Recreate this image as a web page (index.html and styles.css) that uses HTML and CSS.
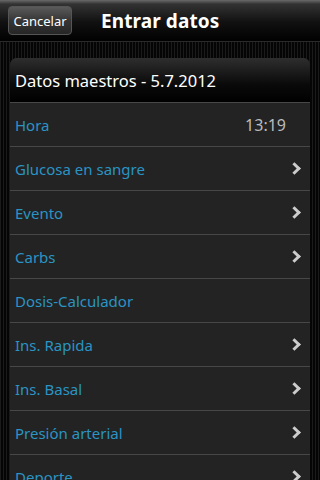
FILE: index.html
```html
<!doctype html>
<html lang="es">
<head>
  <meta charset="utf-8"/>
  <title>Entrar datos</title>
  <link rel="stylesheet" href="styles.css">
</head>
<body>
<div class="topbar">
  <button class="cancel">Cancelar</button>
  <h1>Entrar datos</h1>
</div>
<div class="content">
  <div class="card">
    <div class="card-head">Datos maestros - 5.7.2012</div>
    <div class="row"><span class="label">Hora</span><span class="value">13:19</span></div>
    <div class="row"><span class="label">Glucosa en sangre</span><span class="chev"></span></div>
    <div class="row"><span class="label">Evento</span><span class="chev"></span></div>
    <div class="row"><span class="label">Carbs</span><span class="chev"></span></div>
    <div class="row"><span class="label">Dosis-Calculador</span></div>
    <div class="row"><span class="label">Ins. Rapida</span><span class="chev"></span></div>
    <div class="row"><span class="label">Ins. Basal</span><span class="chev"></span></div>
    <div class="row"><span class="label">Presión arterial</span><span class="chev"></span></div>
    <div class="row"><span class="label">Deporte</span><span class="chev"></span></div>
  </div>
</div>
</body>
</html>
```

FILE: styles.css
```css
:root{
  --blue:#2a94c4;--row:#232323;--line:#474747;
}
html,body{margin:0;padding:0;height:100%;overflow:hidden}
body{
  font-family:"Noto Sans","Open Sans",sans-serif;background:#000;color:#fff;
  width:320px;height:480px;
}
.topbar{
  height:42px;display:flex;align-items:center;padding:0 0 0 8px;
  background:linear-gradient(#6a6a6a 0,#333 4px,#111 22px,#000 42px);
  border-bottom:1px solid #2a2a2a;box-sizing:border-box;
}
.cancel{
  font-family:inherit;font-size:13px;color:#fff;height:29px;width:64px;padding:0;
  border:1px solid #555;border-radius:4px;
  background:linear-gradient(#5a5a5a,#363636 50%,#262626);
}
h1{font-size:19px;font-weight:700;margin:0 0 0 29px;letter-spacing:.1px}
.content{
  height:438px;padding:16px 10px 0;box-sizing:border-box;
  background:repeating-linear-gradient(90deg,#1b1b1b 0,#1b1b1b 1px,#050505 1px,#050505 3px);
}
.card{border-radius:7px 7px 0 0;overflow:hidden;background:var(--row)}
.card-head{
  height:45px;display:flex;align-items:center;padding:0 5px;font-size:16.5px;
  background:linear-gradient(#2e2e2e,#0a0a0a 60%,#000);border-bottom:1px solid var(--line);
  box-sizing:border-box;
}
.row{
  height:44px;display:flex;align-items:center;justify-content:space-between;
  padding:0 7px 0 5px;border-bottom:1px solid var(--line);box-sizing:border-box;
  background:var(--row);
}
.label{color:var(--blue);font-size:15px}
.value{color:#bbb;font-size:16px;margin-right:17px}
.chev{
  width:6px;height:6px;border-top:3px solid #ccc;border-right:3px solid #ccc;
  transform:rotate(45deg);margin-right:4px;
}
```
